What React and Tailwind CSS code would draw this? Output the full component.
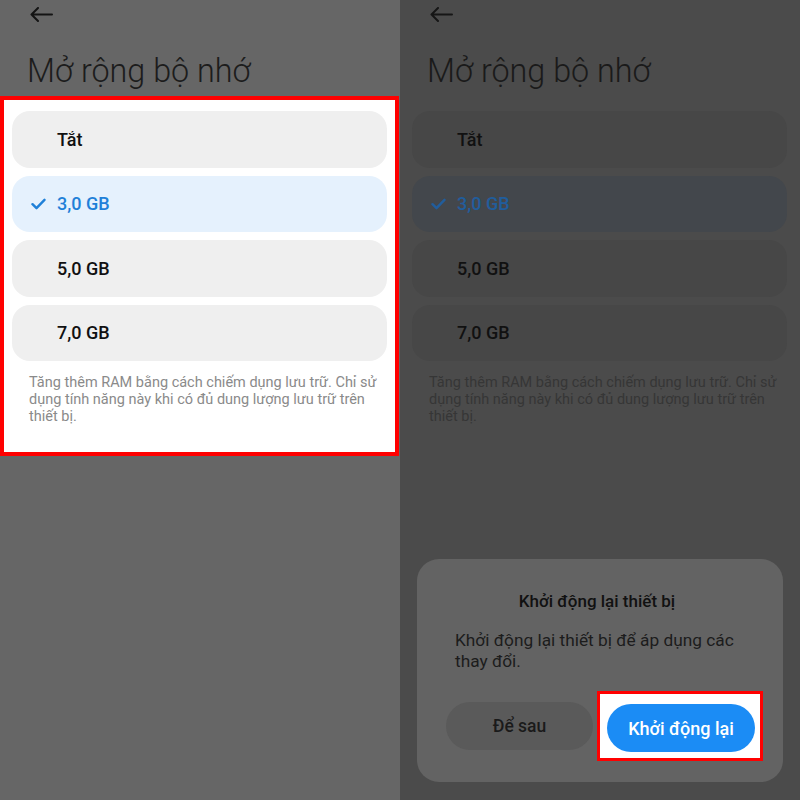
import React from "react";

const font = { fontFamily: "Roboto, 'Noto Sans', 'Liberation Sans', sans-serif" };

function BackArrow({ color }) {
  return (
    <svg width="23" height="15" viewBox="0 0 23 15" fill="none">
      <path d="M22 7.5H1.5M8 1L1.5 7.5L8 14" stroke={color} strokeWidth="2" strokeLinecap="round" strokeLinejoin="round" />
    </svg>
  );
}

function Check({ color }) {
  return (
    <svg width="15" height="12" viewBox="0 0 15 12" fill="none">
      <path d="M1.5 6.2L5.5 10.2L13.5 1.8" stroke={color} strokeWidth="2.4" strokeLinecap="round" strokeLinejoin="round" />
    </svg>
  );
}

const options = ["Tắt", "3,0 GB", "5,0 GB", "7,0 GB"];

function Screen({ dim }) {
  const arrowColor = dim ? "#161616" : "#141414";
  return (
    <div className={`relative w-[400px] h-[800px] ${dim ? "bg-[#4b4b4b]" : "bg-[#666666]"}`}>
      <div className="h-[53px] pl-[30px] pt-[7px]">
        <BackArrow color={arrowColor} />
      </div>
      <div className={`pl-[27px] text-[32.3px] leading-[37px] font-light ${dim ? "text-[#1a1a1a]" : "text-[#1c1c1c]"}`}>
        Mở rộng bộ nhớ
      </div>
      <div
        className={`mt-[6px] w-[399px] h-[360px] border-4 pt-[11px] px-2 ${
          dim ? "border-transparent" : "border-[#ff0000] bg-white"
        }`}
      >
        <div className="flex flex-col gap-[8px]">
          {options.map((o, i) => {
            const sel = i === 1;
            let bg, tc;
            if (dim) {
              bg = sel ? "bg-[#43474c]" : "bg-[#474747]";
              tc = sel ? "text-[#215d9c]" : "text-[#111111]";
            } else {
              bg = sel ? "bg-[#e5f1fd]" : "bg-[#efefef]";
              tc = sel ? "text-[#1f80d8]" : "text-[#111111]";
            }
            return (
              <div key={o} className={`h-[56.5px] rounded-[18px] flex items-center pl-[19px] ${bg}`}>
                <div className="w-[26px] flex items-center">
                  {sel && <Check color={dim ? "#215d9c" : "#1f80d8"} />}
                </div>
                <span className={`text-[18px] font-medium ${tc}`}>{o}</span>
              </div>
            );
          })}
        </div>
        <div
          className={`mt-[14px] ml-[17px] text-[14.5px] leading-[16.8px] whitespace-nowrap ${
            dim ? "text-[#363636]" : "text-[#8a8a8a]"
          }`}
        >
          Tăng thêm RAM bằng cách chiếm dụng lưu trữ. Chỉ sử
          <br />
          dụng tính năng này khi có đủ dung lượng lưu trữ trên
          <br />
          thiết bị.
        </div>
      </div>

      {dim && (
        <div className="absolute left-[17px] top-[559px] w-[366px] h-[223px] rounded-[22px] bg-[#636363] pt-[31px] pl-[29px] pr-[20px]">
          <div className="pr-[15px] text-center text-[17px] leading-[22px] font-medium text-[#111111]">
            Khởi động lại thiết bị
          </div>
          <div className="mt-[18px] pl-[9px] text-[17.3px] leading-[21px] text-[#1c1c1c] whitespace-nowrap">
            Khởi động lại thiết bị để áp dụng các
            <br />
            thay đổi.
          </div>
          <div className="mt-[19px] flex items-center">
            <div className="shrink-0 w-[147px] h-[48px] rounded-full bg-[#5a5a5a] flex items-center justify-center text-[17.5px] font-medium text-[#1a1a1a]">
              Để sau
            </div>
            <div className="shrink-0 ml-[4px] w-[166px] h-[70px] border-[3px] border-[#ff0000] bg-white pl-[7px] pt-[10px]">
              <div className="w-[148px] h-[48px] rounded-full bg-[#1b8cf5] flex items-center justify-center text-[18px] font-medium text-white">
                Khởi động lại
              </div>
            </div>
          </div>
        </div>
      )}
    </div>
  );
}

export default function App() {
  return (
    <div className="flex w-[800px] h-[800px] overflow-hidden" style={font}>
      <Screen dim={false} />
      <Screen dim={true} />
    </div>
  );
}
